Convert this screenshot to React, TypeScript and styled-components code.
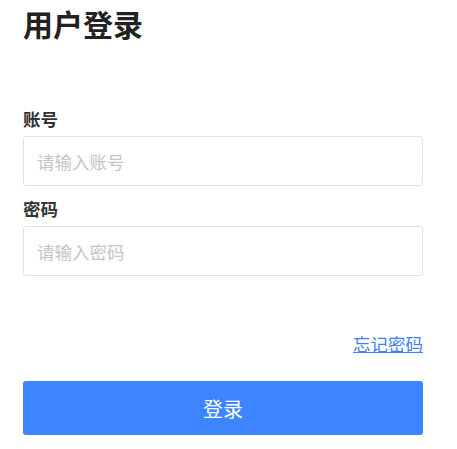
import React from 'react';
import styled, { createGlobalStyle } from 'styled-components';

const GlobalStyle = createGlobalStyle`
  body {
    margin: 0;
    background: #fff;
    font-family: "Noto Sans CJK SC", "Noto Sans", sans-serif;
  }
`;

const Page = styled.div`
  width: 400px;
  padding: 3px 0 0 23px;
  display: flex;
  flex-direction: column;
`;

const Title = styled.h1`
  margin: 0 0 64px;
  font-size: 30px;
  line-height: 40px;
  font-weight: 700;
  color: #222;
`;

const Field = styled.div`
  display: flex;
  flex-direction: column;
  gap: 5px;
  margin-bottom: 11px;
`;

const Label = styled.label`
  font-size: 17.5px;
  line-height: 24px;
  font-weight: 700;
  color: #333;
`;

const Input = styled.input`
  box-sizing: border-box;
  width: 400px;
  height: 50px;
  padding: 0 13px;
  border: 1px solid #e2e2e2;
  border-radius: 3px;
  font-family: inherit;
  font-size: 17.5px;
  color: #333;
  outline: none;

  &::placeholder {
    color: #c4c4c4;
  }
`;

const LinkRow = styled.div`
  display: flex;
  justify-content: flex-end;
  margin-top: 45px;
  margin-bottom: 25px;
`;

const ForgotLink = styled.a`
  font-size: 17.5px;
  line-height: 24px;
  color: #3d82f7;
  text-decoration: underline;
  cursor: pointer;
`;

const SubmitButton = styled.button`
  height: 54px;
  width: 400px;
  border: none;
  border-radius: 3px;
  background: #3d84ff;
  color: #fff;
  font-family: inherit;
  font-size: 20px;
  cursor: pointer;
`;

export default function App() {
  return (
    <>
      <GlobalStyle />
      <Page>
        <Title>用户登录</Title>
        <Field>
          <Label>账号</Label>
          <Input placeholder="请输入账号" />
        </Field>
        <Field>
          <Label>密码</Label>
          <Input type="password" placeholder="请输入密码" />
        </Field>
        <LinkRow>
          <ForgotLink>忘记密码</ForgotLink>
        </LinkRow>
        <SubmitButton>登录</SubmitButton>
      </Page>
    </>
  );
}
